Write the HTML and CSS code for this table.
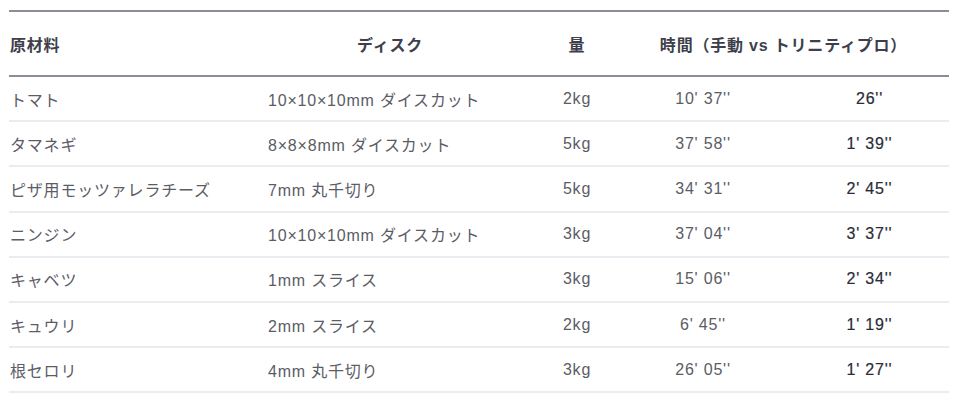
FILE: index.html
```html
<!DOCTYPE html>
<html lang="ja">
<head>
<meta charset="utf-8">
<link rel="stylesheet" href="styles.css">
</head>
<body>
<table class="cut-table">
  <colgroup>
    <col class="c-name">
    <col class="c-disc">
    <col class="c-qty">
    <col class="c-manual">
    <col class="c-pro">
  </colgroup>
  <thead>
    <tr>
      <th class="h-name">原材料</th>
      <th class="h-center">ディスク</th>
      <th class="h-center">量</th>
      <th class="h-center" colspan="2">時間（手動 vs トリニティプロ）</th>
    </tr>
  </thead>
  <tbody>
    <tr><td class="name">トマト</td><td class="disc">10×10×10mm ダイスカット</td><td class="center">2kg</td><td class="center">10' 37''</td><td class="pro">26''</td></tr>
    <tr><td class="name">タマネギ</td><td class="disc">8×8×8mm ダイスカット</td><td class="center">5kg</td><td class="center">37' 58''</td><td class="pro">1' 39''</td></tr>
    <tr><td class="name">ピザ用モッツァレラチーズ</td><td class="disc">7mm 丸千切り</td><td class="center">5kg</td><td class="center">34' 31''</td><td class="pro">2' 45''</td></tr>
    <tr><td class="name">ニンジン</td><td class="disc">10×10×10mm ダイスカット</td><td class="center">3kg</td><td class="center">37' 04''</td><td class="pro">3' 37''</td></tr>
    <tr><td class="name">キャベツ</td><td class="disc">1mm スライス</td><td class="center">3kg</td><td class="center">15' 06''</td><td class="pro">2' 34''</td></tr>
    <tr><td class="name">キュウリ</td><td class="disc">2mm スライス</td><td class="center">2kg</td><td class="center">6' 45''</td><td class="pro">1' 19''</td></tr>
    <tr><td class="name">根セロリ</td><td class="disc">4mm 丸千切り</td><td class="center">3kg</td><td class="center">26' 05''</td><td class="pro">1' 27''</td></tr>
  </tbody>
</table>
</body>
</html>
```

FILE: styles.css
```css
html, body {
  margin: 0;
  background: #ffffff;
}
body {
  padding: 10px 9px 0 9px;
  font-family: "Liberation Sans", "Noto Sans CJK JP", sans-serif;
  font-size: 16px;
  letter-spacing: 0.8px;
  color: #5b5c66;
}
.cut-table {
  width: 940px;
  border-collapse: collapse;
  table-layout: fixed;
}
.c-name { width: 235px; }
.c-disc { width: 292px; }
.c-qty { width: 82px; }
.c-manual { width: 170px; }
.c-pro { width: 161px; }

.cut-table thead tr {
  border-top: 2px solid #8b8d9b;
  border-bottom: 2px solid #8b8d9b;
}
.cut-table th {
  height: 63px;
  padding: 0;
  font-weight: 700;
  color: #3e3f4a;
  vertical-align: middle;
}
.h-name { text-align: left; padding-left: 1px !important; }
.h-center { text-align: center; }

.cut-table tbody tr {
  border-bottom: 2px solid #ebecf2;
}
.cut-table td {
  height: 43.2px;
  padding: 0;
  vertical-align: middle;
  white-space: nowrap;
}
.name { padding-left: 1px !important; text-align: left; }
.disc { padding-left: 24px !important; text-align: left; }
.center { text-align: center; }
.pro {
  text-align: center;
  color: #2a2b36;
  font-weight: 400;
  -webkit-text-stroke: 0.2px #2a2b36;
  padding-left: 2px !important;
}
```
